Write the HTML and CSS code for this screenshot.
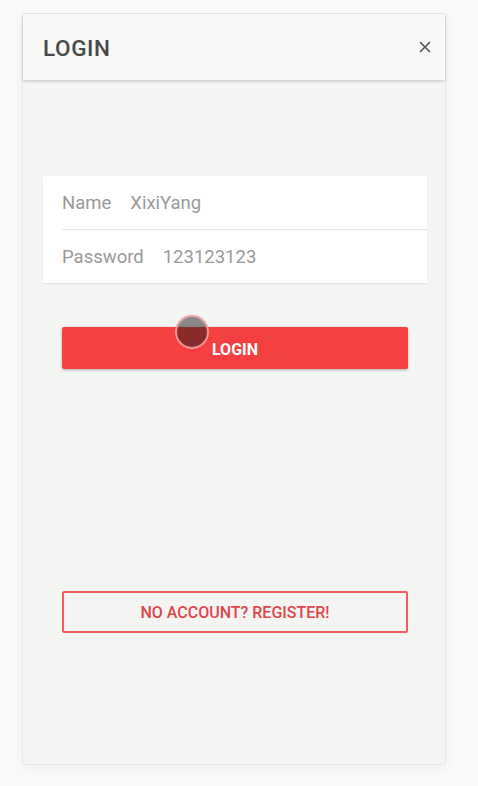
FILE: index.html
```html
<!DOCTYPE html>
<html>
<head>
<meta charset="utf-8">
<link rel="stylesheet" href="styles.css">
</head>
<body>
<div class="frame">
  <header class="header">
    <span class="title">LOGIN</span>
    <span class="close">
      <svg width="12" height="12" viewBox="0 0 12 12"><path d="M1 1L11 11M11 1L1 11" stroke="#555" stroke-width="1.6" fill="none"/></svg>
    </span>
  </header>
  <main class="content">
    <div class="card">
      <div class="row"><span class="label">Name</span><span class="value">XixiYang</span></div>
      <div class="row"><span class="label">Password</span><span class="value">123123123</span></div>
    </div>
    <div class="btn-wrap">
      <button class="btn primary">LOGIN</button>
      <span class="touch"></span>
    </div>
    <button class="btn outline">NO ACCOUNT? REGISTER!</button>
  </main>
</div>
</body>
</html>
```
FILE: styles.css
```css
html, body { margin: 0; padding: 0; }
body {
  background: #fafafa;
  font-family: Roboto, "Liberation Sans", Arial, sans-serif;
  width: 478px;
  height: 786px;
  overflow: hidden;
}
.frame {
  margin: 14px 0 0 23px;
  width: 422px;
  height: 750px;
  background: #f4f4f3;
  box-shadow: 0 0 1px rgba(0,0,0,0.25), 0 4px 14px rgba(0,0,0,0.06);
  display: flex;
  flex-direction: column;
}
.header {
  height: 66px;
  background: #f8f8f7;
  box-shadow: 0 1px 3px rgba(0,0,0,0.22);
  display: flex;
  align-items: center;
  justify-content: space-between;
  padding: 0 14px 0 20px;
  position: relative;
  z-index: 1;
}
.title {
  font-size: 22.5px;
  color: #484848;
  font-weight: 500;
  letter-spacing: 0.6px;
  padding-top: 2px;
}
.close { display: flex; align-items: center; }
.content {
  padding-top: 96px;
  display: flex;
  flex-direction: column;
}
.card {
  margin: 0 18px 0 20px;
  background: #fff;
  box-shadow: 0 1px 1px rgba(0,0,0,0.06);
}
.row {
  height: 53px;
  display: flex;
  align-items: center;
  margin-left: 19px;
  font-size: 18.5px;
  color: #999;
}
.row + .row { border-top: 1px solid #e2e2e2; }
.label { margin-right: 19px; }
.btn-wrap {
  position: relative;
  margin: 44px 37px 0 39px;
}
.btn {
  display: block;
  width: 100%;
  height: 42px;
  font-family: Roboto, "Liberation Sans", Arial, sans-serif;
  font-size: 16px;
  border-radius: 2px;
  padding: 0;
  cursor: pointer;
}
.primary {
  background: #f44040;
  color: #fff;
  border: none;
  font-weight: 700;
  padding-top: 2px;
  box-shadow: 0 1px 3px rgba(0,0,0,0.3);
}
.touch {
  position: absolute;
  left: 113px;
  top: -12px;
  width: 30px;
  height: 30px;
  border-radius: 50%;
  background: rgba(20,20,20,0.48);
  border: 2px solid rgba(255,170,170,0.85);
}
.outline {
  margin: 222px 37px 0 39px;
  width: auto;
  background: transparent;
  border: 2px solid #f05a62;
  color: #e0454d;
  font-weight: 500;
}
```
